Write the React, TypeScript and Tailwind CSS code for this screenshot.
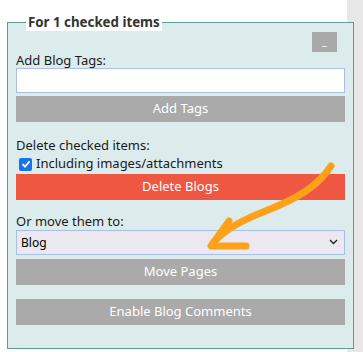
import React from 'react';

const font = { fontFamily: '"Noto Sans", "Open Sans", sans-serif' };

function GreyButton({ label, className = '' }: { label: string; className?: string }) {
  return (
    <button
      type="button"
      className={`flex h-[26px] w-full items-center justify-center bg-[#aaaaaa] text-[13px] text-white ${className}`}
    >
      {label}
    </button>
  );
}

export default function App() {
  return (
    <div className="flex h-[352px] w-[363px] bg-white" style={font}>
      <div className="w-[347px] shrink-0 pl-[7px] pt-[13px]">
        <fieldset className="relative w-[347px] border border-[#5f9a93] bg-[#dcecec] px-[8px] pb-[23px] pt-0">
          <legend className="ml-[10px] bg-white px-[2px] text-[13.3px] font-bold leading-[18px] text-[#333333]">
            For 1 checked items
          </legend>

          <div className="mt-[1px] flex justify-end pr-[8px]">
            <button
              type="button"
              className="flex h-[20px] w-[25px] items-center justify-center bg-[#a9a9a9] pb-[3px] text-[11px] leading-none text-white"
            >
              _
            </button>
          </div>

          <div className="text-[13px] leading-[16px] text-[#1a1a1a]">Add Blog Tags:</div>
          <input
            type="text"
            className="block h-[25px] w-full border border-[#a8c0e8] bg-white outline-none"
          />
          <GreyButton label="Add Tags" className="mt-[3px] h-[25px]" />

          <div className="mt-[15px] text-[13px] leading-[17px] text-[#1a1a1a]">Delete checked items:</div>
          <label className="mt-[1px] flex h-[18px] items-center gap-[4px] pl-[3px] text-[13px] text-[#1a1a1a]">
            <span className="flex h-[13px] w-[13px] items-center justify-center rounded-[2px] bg-[#1a73e8]">
              <svg width="10" height="10" viewBox="0 0 10 10">
                <path d="M1.5 5.2 L4 7.6 L8.6 2.4" fill="none" stroke="white" strokeWidth="1.8" />
              </svg>
            </span>
            Including images/attachments
          </label>
          <button
            type="button"
            className="mt-[1px] flex h-[26px] w-full items-center justify-center bg-[#ef5742] text-[13px] text-white"
          >
            Delete Blogs
          </button>

          <div className="mt-[13px] text-[13px] leading-[17px] text-[#1a1a1a]">Or move them to:</div>
          <div className="relative">
            <select className="block h-[25px] w-full appearance-none border border-[#a8c0e8] bg-[#ebe9ef] pl-[4px] text-[12px] text-black outline-none">
              <option>Blog</option>
            </select>
            <svg
              className="pointer-events-none absolute right-[7px] top-[9px]"
              width="9"
              height="6"
              viewBox="0 0 9 6"
            >
              <path d="M1 1 L4.5 4.5 L8 1" fill="none" stroke="#222" strokeWidth="1.4" />
            </svg>
          </div>
          <GreyButton label="Move Pages" className="mt-[4px]" />
          <GreyButton label="Enable Blog Comments" className="mt-[14px]" />
        </fieldset>
      </div>
      <div className="flex-1 bg-[#e7e7e7]" />

      <svg
        className="pointer-events-none absolute left-0 top-0"
        width="363"
        height="352"
        viewBox="0 0 363 352"
      >
        <path
          d="M331 166 C 318 186, 298 198, 268 210 C 245 219, 226 228, 213 243"
          fill="none"
          stroke="#fba21a"
          strokeWidth="7"
          strokeLinecap="round"
        />
        <path
          d="M229 221 L211 246 L246 246"
          fill="none"
          stroke="#fba21a"
          strokeWidth="7"
          strokeLinecap="round"
          strokeLinejoin="round"
        />
      </svg>
    </div>
  );
}
